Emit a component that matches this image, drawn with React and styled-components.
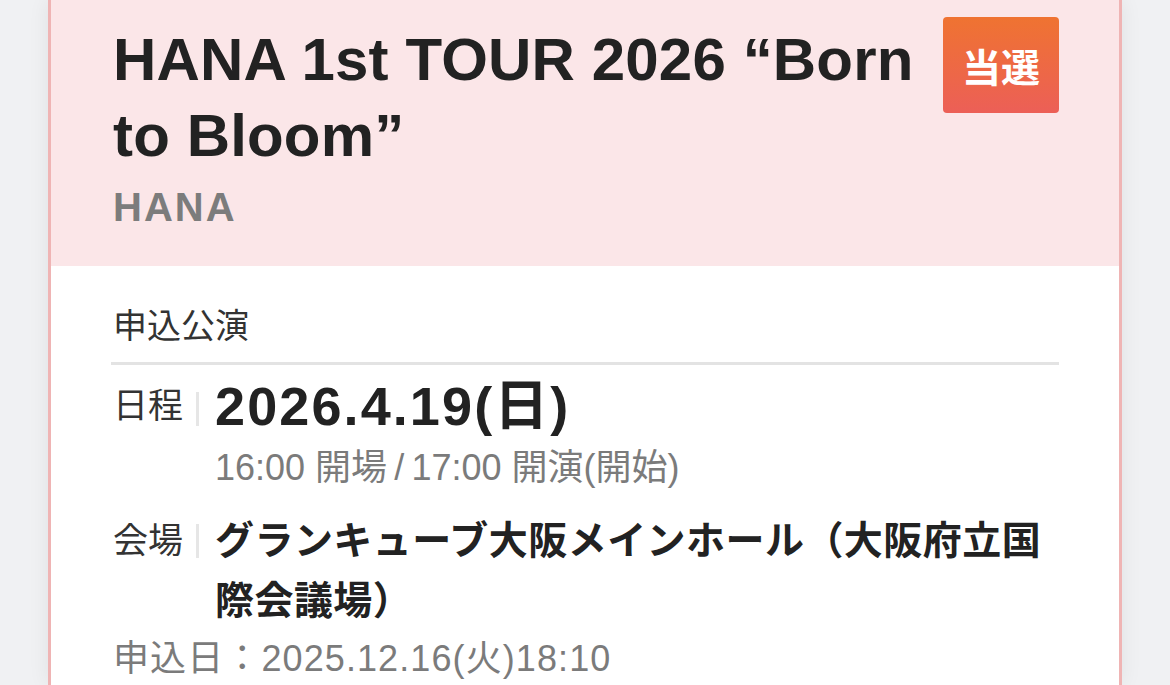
import styled, { createGlobalStyle } from "styled-components"

const Global = createGlobalStyle`
  html, body {
    margin: 0;
    padding: 0;
    background: #f0f1f3;
  }
  body {
    font-family: "Liberation Sans", "Noto Sans CJK JP", sans-serif;
    color: #222;
  }
`

const Page = styled.div`
  height: 685px;
  overflow: hidden;
  padding-left: 48px;
`

const Card = styled.div`
  box-sizing: border-box;
  width: 1074px;
  min-height: 685px;
  background: #fff;
  border-left: 3px solid #efb4b4;
  border-right: 3px solid #efb4b4;
  box-shadow: 0 0 20px rgba(0, 0, 0, 0.07);
`

const Header = styled.div`
  display: flex;
  align-items: flex-start;
  gap: 12px;
  background: #fbe6e8;
  padding: 17px 60px 34px 62px;
`

const TitleBlock = styled.div`
  flex: 1;
  margin-top: 5px;
`

const Title = styled.h1`
  margin: 0;
  font-size: 60px;
  line-height: 76px;
  font-weight: 700;
  letter-spacing: 0.15px;
  color: #222;
`

const Artist = styled.div`
  margin-top: 8px;
  font-size: 40px;
  line-height: 50px;
  font-weight: 700;
  letter-spacing: 2px;
  color: #7c7c7c;
`

const Badge = styled.div`
  flex: none;
  width: 116px;
  height: 96px;
  display: flex;
  align-items: center;
  justify-content: center;
  border-radius: 4px;
  background: linear-gradient(180deg, #ef7331 0%, #ec5f57 100%);
  color: #fff;
  font-size: 39px;
  font-weight: 700;
`

const Body = styled.div`
  padding: 40px 60px 0 62px;
`

const SectionTitle = styled.div`
  font-size: 34px;
  line-height: 40px;
  color: #333;
`

const Divider = styled.hr`
  margin: 16px 0 11px -2px;
  border: 0;
  height: 3px;
  background: #e3e3e3;
`

const Row = styled.div`
  display: flex;
  align-items: flex-start;
  margin-top: ${p => p.$gap || 0}px;
`

const Label = styled.div`
  flex: none;
  width: 70px;
  font-size: 35px;
  line-height: 60px;
  color: #333;
`

const Sep = styled.span`
  flex: none;
  width: 3px;
  height: 34px;
  margin: ${p => p.$top}px 16px 0 13px;
  background: #e6e6e6;
`

const Value = styled.div`
  flex: 1;
`

const DateText = styled.div`
  font-size: 54px;
  line-height: 60px;
  font-weight: 700;
  letter-spacing: 2.1px;
  color: #222;
`

const Muted = styled.div`
  margin-top: ${p => p.$gap || 0}px;
  font-size: 36px;
  line-height: 44px;
  letter-spacing: ${p => p.$spacing || 0}px;
  color: #7b7b7b;
`

const Venue = styled.div`
  font-size: 39px;
  line-height: 60px;
  font-weight: 700;
  letter-spacing: 0.45px;
  color: #222;
`

export default function App() {
  return (
    <>
      <Global />
      <Page>
        <Card>
          <Header>
            <TitleBlock>
              <Title>HANA 1st TOUR 2026 “Born to Bloom”</Title>
              <Artist>HANA</Artist>
            </TitleBlock>
            <Badge>当選</Badge>
          </Header>
          <Body>
            <SectionTitle>申込公演</SectionTitle>
            <Divider />
            <Row>
              <Label>日程</Label>
              <Sep $top={16} />
              <Value>
                <DateText>2026.4.19(日)</DateText>
                <Muted $gap={10}>16:00 開場{"\u2009/\u2009"}17:00 開演(開始)</Muted>
              </Value>
            </Row>
            <Row $gap={21}>
              <Label>会場</Label>
              <Sep $top={13} />
              <Value>
                <Venue>グランキューブ大阪メインホール（大阪府立国際会議場）</Venue>
              </Value>
            </Row>
            <Muted $gap={6} $spacing={1.1}>申込日：2025.12.16(火)18:10</Muted>
          </Body>
        </Card>
      </Page>
    </>
  )
}
